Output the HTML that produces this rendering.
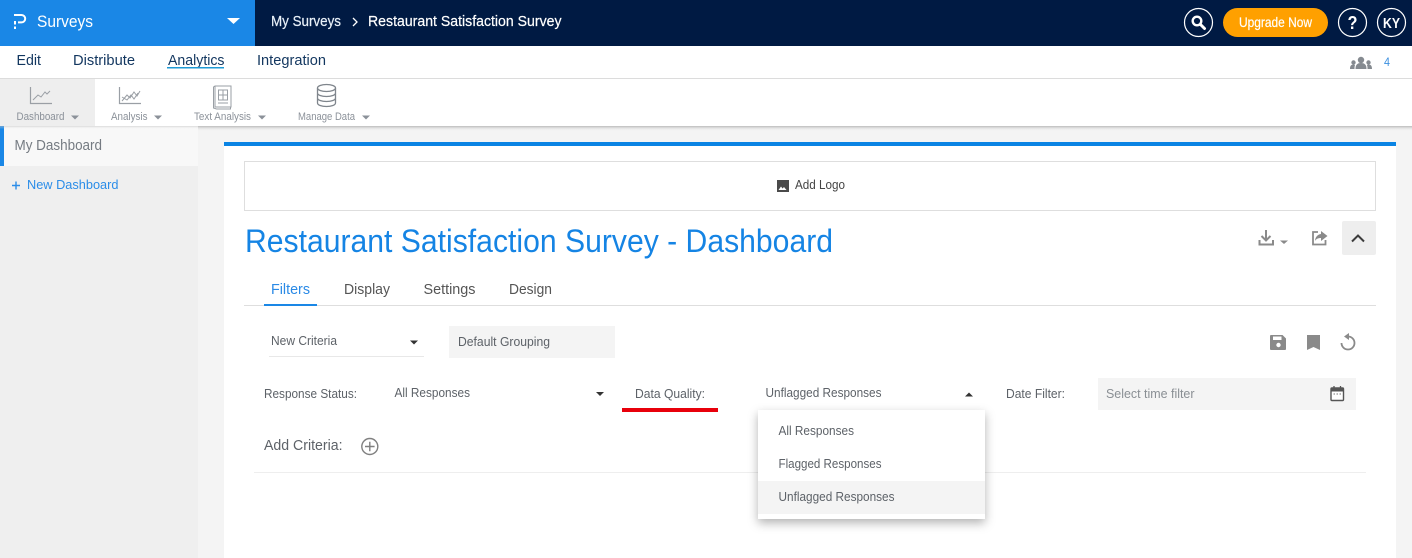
<!DOCTYPE html>
<html><head><meta charset="utf-8"><title>Restaurant Satisfaction Survey - Dashboard</title>
<style>
html,body{margin:0;padding:0;background:#f4f4f4;width:1412px;height:558px;overflow:hidden}
svg{display:block}
text{font-family:"Liberation Sans",sans-serif;white-space:pre}
</style></head><body>
<svg width="1412" height="558" viewBox="0 0 1412 558" xmlns="http://www.w3.org/2000/svg">
<defs>
<linearGradient id="sh" x1="0" y1="0" x2="0" y2="1"><stop offset="0" stop-color="#bbb"/><stop offset="1" stop-color="#f4f4f4" stop-opacity="0"/></linearGradient>
<filter id="ds" x="-10%" y="-10%" width="120%" height="125%"><feDropShadow dx="0" dy="4" stdDeviation="5" flood-color="#000" flood-opacity=".3"/></filter>
</defs>
<rect width="1412" height="558" fill="#f4f4f4"/>
<!-- top bar -->
<rect width="1412" height="46" fill="#001a43"/>
<rect width="255" height="46" fill="#1a87e6"/>
<path d="M14 15h7.500a3.700 3.700 0 0 1 0 7.400H18" fill="none" stroke="#fff" stroke-width="2"/>
<path d="M15 21v3.500M15 26.500v2.500" fill="none" stroke="#fff" stroke-width="2"/>
<text x="37" y="27" font-size="17" fill="#fff" textLength="56" lengthAdjust="spacingAndGlyphs">Surveys</text>
<path d="M227 18h13l-6.500 6z" fill="#fff"/>
<text x="271" y="26" font-size="15" fill="#e8f0f8" stroke="#e8f0f8" stroke-width=".2" textLength="70" lengthAdjust="spacingAndGlyphs">My Surveys</text>
<path d="M353 18l4 4-4 4" fill="none" stroke="#fff" stroke-width="1.300"/>
<text x="368" y="26" font-size="15" fill="#fff" textLength="193.500" lengthAdjust="spacingAndGlyphs" stroke="#fff" stroke-width=".2">Restaurant Satisfaction Survey</text>
<circle cx="1198.500" cy="22.500" r="14" fill="none" stroke="#fff" stroke-width="1.200"/>
<circle cx="1197" cy="21" r="4.300" fill="none" stroke="#fff" stroke-width="2.400"/>
<path d="M1200.500 24.500l4 4" stroke="#fff" stroke-width="3" stroke-linecap="round"/>
<rect x="1223" y="8" width="105" height="29" rx="14.500" fill="#ffa000"/>
<text x="1239" y="27" font-size="14" fill="#fff" textLength="73" lengthAdjust="spacingAndGlyphs" stroke="#fff" stroke-width=".2">Upgrade Now</text>
<circle cx="1352.500" cy="22.500" r="14" fill="none" stroke="#fff" stroke-width="1.200"/>
<text x="1347.500" y="29" font-size="18" font-weight="700" fill="#fff" textLength="10" lengthAdjust="spacingAndGlyphs">?</text>
<circle cx="1391.500" cy="22.500" r="14" fill="none" stroke="#fff" stroke-width="1.200"/>
<text x="1383" y="28" font-size="15" font-weight="700" fill="#fff" textLength="17" lengthAdjust="spacingAndGlyphs">KY</text>
<!-- nav -->
<rect y="46" width="1412" height="33" fill="#fff"/>
<rect y="78" width="1412" height="1" fill="#dcdcdc"/>
<g font-size="15" fill="#12365f">
<text x="16.500" y="65" textLength="24.500" lengthAdjust="spacingAndGlyphs">Edit</text>
<text x="73" y="65" textLength="62" lengthAdjust="spacingAndGlyphs">Distribute</text>
<text x="168" y="65" textLength="56.500" lengthAdjust="spacingAndGlyphs">Analytics</text>
<text x="257" y="65" textLength="69" lengthAdjust="spacingAndGlyphs">Integration</text>
</g>
<rect x="167" y="67" width="57" height="1.500" fill="#1e9ad6"/>
<g fill="#858a90">
<circle cx="1361" cy="60" r="3.200"/><path d="M1355.500 69c0-4.500 2-6 5.500-6s5.500 1.500 5.500 6z"/>
<circle cx="1353.500" cy="62.500" r="2.200"/><path d="M1350 69c0-3 1-4.500 3.500-4.500 1 0 1.500.3 1.500.8-.5 1-.5 2.200-.5 3.700z"/>
<circle cx="1368.500" cy="62.500" r="2.200"/><path d="M1372 69c0-3-1-4.500-3.500-4.500-1 0-1.500.3-1.500.8.500 1 .5 2.200.5 3.700z"/>
</g>
<text x="1384" y="66" font-size="12" fill="#3a8fe0" textLength="6" lengthAdjust="spacingAndGlyphs">4</text>
<!-- toolbar -->
<rect y="79" width="1412" height="47" fill="#fff"/>
<rect y="79" width="95" height="47" fill="#eeeeee"/>
<rect y="126" width="1412" height="5" fill="url(#sh)"/>
<g font-size="11" fill="#8b9199">
<text x="16.500" y="120" textLength="48" lengthAdjust="spacingAndGlyphs">Dashboard</text>
<text x="111" y="120" textLength="36.500" lengthAdjust="spacingAndGlyphs">Analysis</text>
<text x="194" y="120" textLength="57" lengthAdjust="spacingAndGlyphs">Text Analysis</text>
<text x="298" y="120" textLength="57" lengthAdjust="spacingAndGlyphs">Manage Data</text>
</g>
<g fill="#8b9199">
<path d="M71 115.500h8l-4 4z"/><path d="M154 115.500h8l-4 4z"/><path d="M258 115.500h8l-4 4z"/><path d="M362 115.500h8l-4 4z"/>
</g>
<g fill="none" stroke="#9a9fa5" stroke-width="1">
<path d="M30.500 87v16.500h21.500" stroke-width="1.200"/>
<path d="M33 100l5-5 3 2 4-5 2 2 3-3"/>
<path d="M119.500 87v16.500h21.500" stroke-width="1.200"/>
<path d="M122 101l5-6 3 3 4-6 3 4 3-5M122 97l5 3 4-5 3 4 4-6"/>
<path d="M215 86h16v21h-16zM215 86l-1.500 1v21l3 1h14v-2"/>
<path d="M218.500 90h9v10h-9zM218.500 95h9M223 90v10M218 103h10"/>
</g>
<g fill="none" stroke="#7f858c" stroke-width="1.300">
<ellipse cx="326.500" cy="88" rx="9" ry="3.500"/>
<path d="M317.500 88v15c0 2 4 3.500 9 3.500s9-1.500 9-3.500V88M317.500 93c0 2 4 3.500 9 3.500s9-1.500 9-3.500M317.500 98c0 2 4 3.500 9 3.500s9-1.500 9-3.500"/>
</g>
<!-- sidebar -->
<rect y="131" width="198" height="427" fill="#efefef"/>
<rect y="126" width="198" height="40" fill="#f8f8f8"/>
<rect y="126" width="4" height="40" fill="#1a87e6"/>
<rect y="126" width="198" height="3" fill="url(#sh)" opacity=".5"/>
<text x="14.500" y="150" font-size="15" fill="#757b82" textLength="87.500" lengthAdjust="spacingAndGlyphs">My Dashboard</text>
<path d="M12 185.500h8M16 181.500v8" stroke="#2b8de8" stroke-width="1.400"/>
<text x="27" y="189" font-size="13" fill="#2b8de8" textLength="91.500" lengthAdjust="spacingAndGlyphs">New Dashboard</text>
<!-- panel -->
<rect x="224" y="142" width="1172" height="416" fill="#fff"/>
<rect x="224" y="142" width="1172" height="4" fill="#0a84e4"/>
<rect x="244.500" y="161.500" width="1131" height="49" fill="#fff" stroke="#dedede"/>
<path d="M777 180h12v12h-12z" fill="#4a4a4a"/><path d="M778.500 190l2.500-3.500 1.500 2 1.500-1.500 2.500 3z" fill="#fff"/>
<text x="795" y="189" font-size="13" fill="#444" textLength="50" lengthAdjust="spacingAndGlyphs">Add Logo</text>
<text x="245" y="252" font-size="32" fill="#1584e4" textLength="588" lengthAdjust="spacingAndGlyphs">Restaurant Satisfaction Survey - Dashboard</text>
<!-- title icons -->
<g fill="none" stroke="#8a8a8a" stroke-width="2">
<path d="M1266 230v10M1261.500 236l4.500 4.500 4.500-4.500"/>
<path d="M1259.500 240v4.500h13.500V240"/>
</g>
<path d="M1280 240.500h8l-4 3.500z" fill="#8a8a8a"/>
<g fill="none" stroke="#8a8a8a" stroke-width="1.800">
<path d="M1318 232h-5v12.500h12.500V240"/>
</g>
<path d="M1321 231l6.500 5-6.500 5v-3c-3 0-5 1-6 3 .3-4 2.500-6.500 6-7z" fill="#8a8a8a"/>
<rect x="1342" y="221" width="34" height="34" rx="2" fill="#eeeeee"/>
<path d="M1352 241.500l6-6 6 6" fill="none" stroke="#3c3c3c" stroke-width="2"/>
<!-- tabs -->
<g font-size="15">
<text x="271" y="294" fill="#2a8ae6" textLength="39" lengthAdjust="spacingAndGlyphs">Filters</text>
<text x="344" y="294" fill="#555" textLength="46" lengthAdjust="spacingAndGlyphs">Display</text>
<text x="423.500" y="294" fill="#555" textLength="52" lengthAdjust="spacingAndGlyphs">Settings</text>
<text x="509" y="294" fill="#555" textLength="43" lengthAdjust="spacingAndGlyphs">Design</text>
</g>
<rect x="244" y="305" width="1132" height="1" fill="#dedede"/>
<rect x="264" y="304" width="53" height="2" fill="#1a87e6"/>
<!-- criteria -->
<text x="271" y="345" font-size="13" fill="#5d6268" textLength="66" lengthAdjust="spacingAndGlyphs">New Criteria</text>
<path d="M410 340.500h8l-4 4z" fill="#333"/>
<rect x="269" y="356" width="155" height="1" fill="#e8e8e8"/>
<rect x="449" y="326" width="166" height="32" fill="#f4f4f4"/>
<text x="458" y="346" font-size="13" fill="#5d6268" textLength="92" lengthAdjust="spacingAndGlyphs">Default Grouping</text>
<!-- right icons -->
<path d="M1271 335h11.500l3.500 3.500V349a1 1 0 0 1-1 1h-14a1 1 0 0 1-1-1v-13a1 1 0 0 1 1-1z" fill="#8a8a8a"/>
<rect x="1273" y="336.500" width="8.500" height="3.500" fill="#fff"/>
<circle cx="1278.500" cy="345" r="2.200" fill="#fff"/>
<path d="M1307 335h13v15l-6.500-3-6.500 3z" fill="#8a8a8a"/>
<path d="M1348 336.500a6.500 6.500 0 1 1-6.500 6.500" fill="none" stroke="#8a8a8a" stroke-width="1.800"/>
<path d="M1349 333v7l-5-3.500z" fill="#8a8a8a"/>
<!-- filters row -->
<g font-size="13" fill="#5d6268">
<text x="264" y="398" textLength="93" lengthAdjust="spacingAndGlyphs">Response Status:</text>
<text x="394.500" y="397" textLength="75.500" lengthAdjust="spacingAndGlyphs">All Responses</text>
<text x="635" y="398" textLength="70" lengthAdjust="spacingAndGlyphs">Data Quality:</text>
<text x="765.500" y="397" textLength="116" lengthAdjust="spacingAndGlyphs">Unflagged Responses</text>
<text x="1006" y="398" textLength="59" lengthAdjust="spacingAndGlyphs">Date Filter:</text>
</g>
<path d="M596 392h8l-4 4z" fill="#333"/>
<path d="M965 396.500h8l-4-4z" fill="#333"/>
<rect x="622" y="408" width="96" height="4" fill="#e8000b"/>
<rect x="1098" y="378" width="258" height="32" fill="#f4f4f4"/>
<text x="1106" y="398" font-size="13" fill="#8a8f94" textLength="88.500" lengthAdjust="spacingAndGlyphs">Select time filter</text>
<rect x="1331" y="388" width="12.500" height="12.500" rx="1" fill="#fff" stroke="#555" stroke-width="1.400"/>
<rect x="1331" y="387.500" width="12.500" height="4" fill="#555"/>
<path d="M1334 386v2M1340.500 386v2" stroke="#555" stroke-width="1.300"/>
<path d="M1333.500 394h1.500M1336.500 394h1.500M1339.500 394h1.500" stroke="#777"/>
<!-- add criteria -->
<text x="264" y="450" font-size="15" fill="#5d6268" textLength="78.500" lengthAdjust="spacingAndGlyphs">Add Criteria:</text>
<circle cx="369.800" cy="446.500" r="8" fill="none" stroke="#808080" stroke-width="1.400"/>
<path d="M365 446.500h9.600M369.800 441.700v9.600" stroke="#808080" stroke-width="1.400"/>
<rect x="254" y="472" width="1112" height="1" fill="#eeeeee"/>
<!-- dropdown -->
<rect x="758" y="410" width="227" height="109" fill="#fff" filter="url(#ds)"/>
<rect x="758" y="481" width="227" height="33" fill="#f4f4f4"/>
<g font-size="13" fill="#5d6268">
<text x="778.500" y="435" textLength="75.500" lengthAdjust="spacingAndGlyphs">All Responses</text>
<text x="778.500" y="468" textLength="103" lengthAdjust="spacingAndGlyphs">Flagged Responses</text>
<text x="778.500" y="501" textLength="116" lengthAdjust="spacingAndGlyphs">Unflagged Responses</text>
</g>
</svg>
</body></html>
